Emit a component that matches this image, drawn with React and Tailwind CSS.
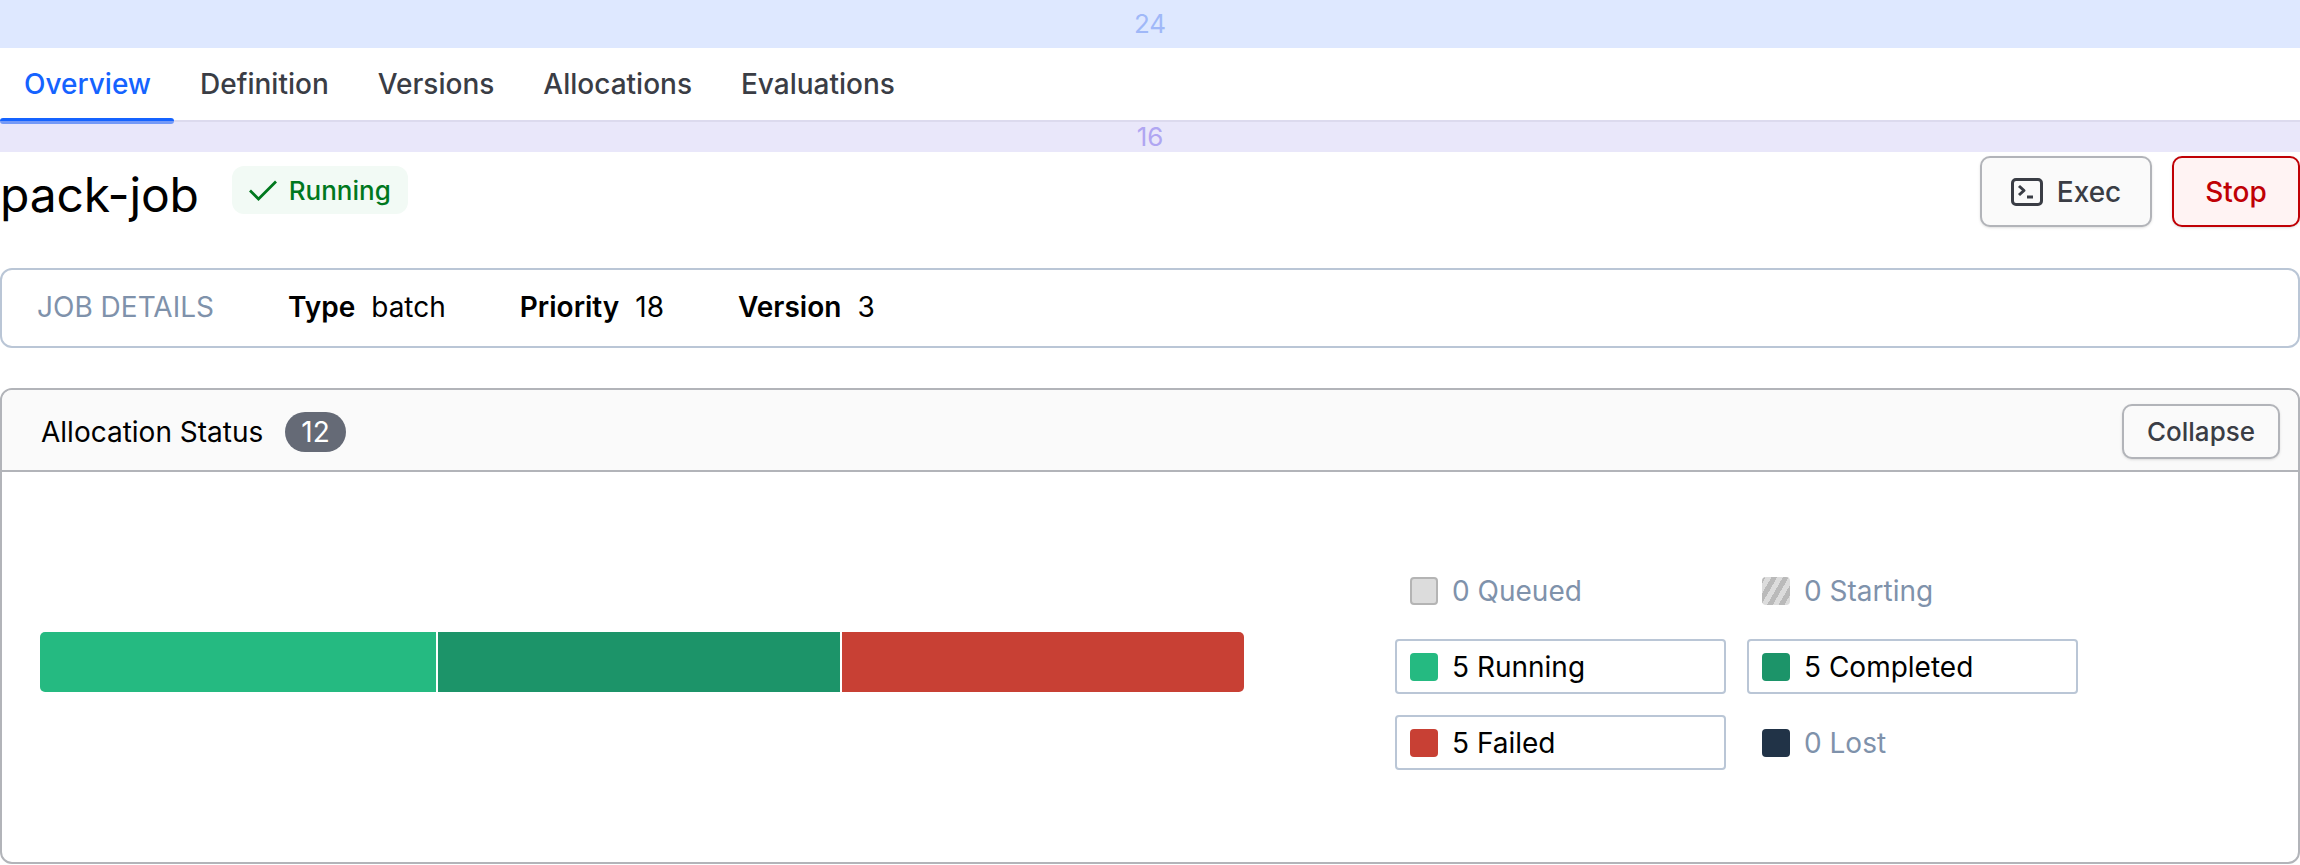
const tabs = ['Overview', 'Definition', 'Versions', 'Allocations', 'Evaluations'];

const legend = [
  { label: '0 Queued', swatch: 'bg-[#dcdcdc] border-2 border-[#b4b4b4]', active: false },
  { label: '0 Starting', swatch: 'bg-[repeating-linear-gradient(-60deg,#dcdcdc,#dcdcdc_5px,#bababa_5px,#bababa_10px)]', active: false },
  { label: '5 Running', swatch: 'bg-[#25ba81]', active: true },
  { label: '5 Completed', swatch: 'bg-[#1c9469]', active: true },
  { label: '5 Failed', swatch: 'bg-[#c84034]', active: true },
  { label: '0 Lost', swatch: 'bg-[#213347]', active: false },
];

function TerminalIcon() {
  return (
    <svg width="32" height="32" viewBox="0 0 16 16" fill="none" stroke="#3a3d45" strokeWidth="1.5" className="shrink-0">
      <rect x="0.75" y="1.75" width="14.5" height="12.5" rx="1.75" />
      <path d="M4 5l2.5 2.25L4 9.5" strokeLinejoin="round" />
      <path d="M8 10.5h3" />
    </svg>
  );
}

function CheckIcon() {
  return (
    <svg width="28" height="21" viewBox="0 0 28 21" fill="none" stroke="#00781e" strokeWidth="2.75" className="shrink-0">
      <path d="M1 10.5l8.5 8.5L27 1.5" />
    </svg>
  );
}

export default function App() {
  return (
    <div className="w-[2300px] h-[865px] overflow-hidden bg-white font-['Inter',sans-serif] text-black">
      <div className="h-12 pb-[2px] bg-[#dee8ff] flex items-center justify-center text-[26px] text-[#a0b8f8]">24</div>

      <div className="relative h-[72px] flex items-center gap-[1px]">
        {tabs.map((t, i) => (
          <div key={t} className={`px-6 text-[28px] font-medium ${i === 0 ? 'text-[#1563ff]' : 'text-[#3a3d45]'}`}>{t}</div>
        ))}
        {/* active tab underline sits over the band below */}
        <div className="absolute left-0 bottom-[-4px] w-[174px] h-[6px] rounded-[3px] overflow-hidden z-10">
          <div className="h-[3px] bg-[#1563ff]" />
          <div className="h-[3px] bg-[#7499f7]" />
        </div>
      </div>

      <div className="h-8 pb-[2px] bg-[#e9e7fa] border-t-2 border-[#dcdaee] flex items-center justify-center text-[26px] text-[#b0a6f2]">16</div>

      <div className="h-[116px] flex justify-between pt-1">
        <div className="flex items-start">
          <h1 className="text-[48px] leading-[72px] mt-[3px] tracking-[-0.2px]">pack-job</h1>
          <div className="ml-[33px] mt-[10px] h-12 px-[17px] flex items-center gap-[12px] rounded-xl bg-[#f2faf5] text-[#00781e] text-[26px] font-medium">
            <CheckIcon />
            Running
          </div>
        </div>
        <div className="flex items-start gap-5">
          <button className="w-[172px] h-[71px] flex items-center justify-center gap-[14px] rounded-[10px] border-2 border-[#b2b4b9] bg-[#fafafa] text-[28px] font-medium text-[#3a3d45] shadow-sm">
            <TerminalIcon />
            Exec
          </button>
          <button className="w-[128px] h-[71px] rounded-[10px] border-2 border-[#c00005] bg-[#fff3f3] text-[28px] font-medium text-[#c00005] shadow-sm">Stop</button>
        </div>
      </div>

      <div className="h-20 flex items-center gap-[74px] pl-[35px] pb-[2px] rounded-xl border-2 border-[#bac6d6]">
        <span className="text-[28px] text-[#7f92ab]">JOB DETAILS</span>
        {[['Type', 'batch'], ['Priority', '18'], ['Version', '3']].map(([k, v]) => (
          <span key={k} className="text-[28px] flex gap-4">
            <span className="font-semibold">{k}</span>
            <span>{v}</span>
          </span>
        ))}
      </div>

      <div className="mt-10 h-[476px] rounded-xl border-2 border-[#b2b4b9] overflow-hidden">
        <div className="h-[82px] pl-[39px] pr-[18px] pt-[3px] flex items-center justify-between bg-[#fafafa] border-b-2 border-[#b2b4b9]">
          <div className="flex items-center gap-[22px]">
            <span className="text-[28px]">Allocation Status</span>
            <span className="h-10 px-4 flex items-center rounded-full bg-[#656a76] text-white text-[28px]">12</span>
          </div>
          <button className="w-[158px] h-[55px] rounded-[10px] border-2 border-[#b2b4b9] bg-[#fafafa] text-[26px] font-medium text-[#3a3d45] shadow-sm">Collapse</button>
        </div>
        <div className="px-[38px] pt-[91px] flex">
          <div className="w-[1204px] h-[60px] mt-[69px] flex gap-[2px] rounded-[5px] overflow-hidden">
            <div className="w-[396px] bg-[#25ba81]" />
            <div className="w-[402px] bg-[#1c9469]" />
            <div className="w-[402px] bg-[#c84034]" />
          </div>
          <div className="ml-[151px] w-[683px] grid grid-cols-2 gap-x-[21px] gap-y-[21px] auto-rows-[55px]">
            {legend.map((l) => (
              <div key={l.label} className={`flex items-center gap-[14px] pl-[13px] rounded border-2 ${l.active ? 'border-[#bac6d6] text-black' : 'border-transparent text-[#7f92ab]'}`}>
                <span className={`w-7 h-7 rounded-[4px] shrink-0 ${l.swatch}`} />
                <span className="text-[28px]">{l.label}</span>
              </div>
            ))}
          </div>
        </div>
      </div>
    </div>
  );
}
